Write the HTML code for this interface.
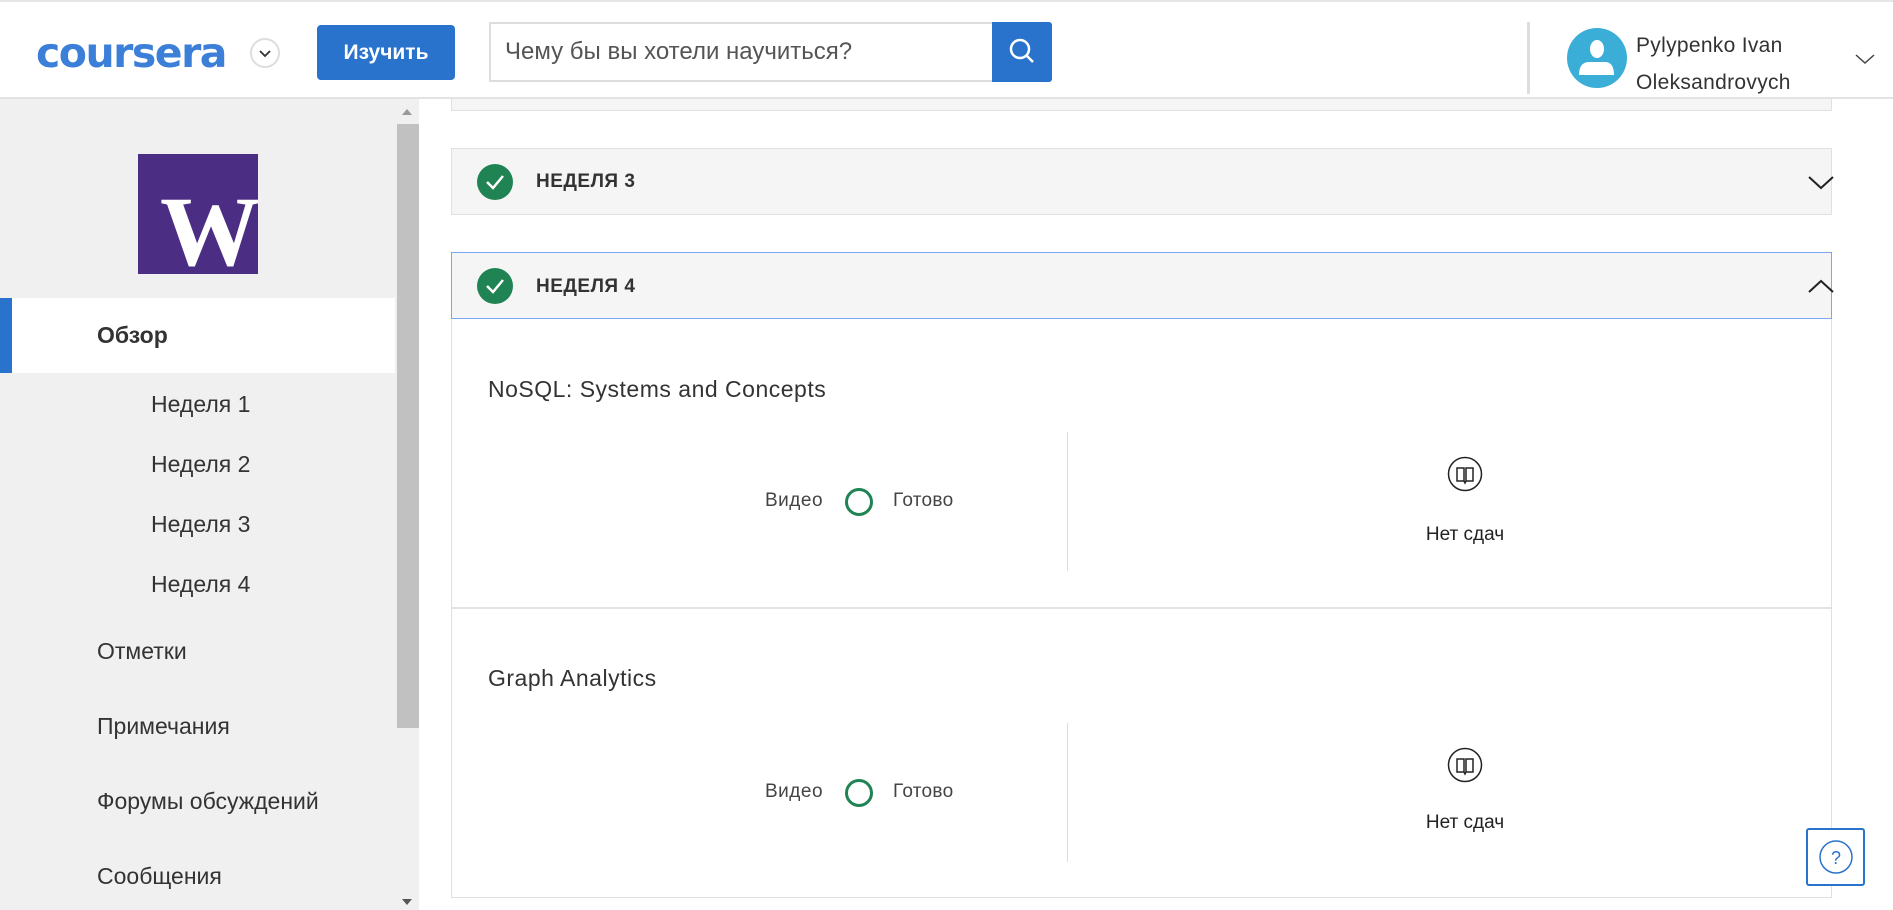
<!DOCTYPE html>
<html><head><meta charset="utf-8"><style>
*{box-sizing:border-box;margin:0;padding:0}
body{width:1893px;height:910px;overflow:hidden;background:#fff;font-family:"Liberation Sans",sans-serif;position:relative;color:#222}
.a{position:absolute}
.hdr{left:0;top:0;width:1893px;height:99px;background:#fff;border-top:2px solid #e6e6e6;border-bottom:2px solid #e3e3e3;z-index:2}
.side{left:0;top:99px;width:419px;height:811px;background:#f0f0f0}
.si{position:absolute;left:97px;font-size:23px;color:#333}
.sub{position:absolute;left:151px;font-size:23px;color:#333}
.card{position:absolute;left:451px;width:1381px;background:#f5f5f5;border:1.5px solid #e0e0e0}
.chk{position:absolute;left:477px;width:36px;height:36px;border-radius:50%;background:#1f8354}
.wk{position:absolute;left:536px;font-size:19px;font-weight:bold;color:#333;letter-spacing:.5px}
.t{position:absolute;left:488px;font-size:23px;color:#333;letter-spacing:.5px}
</style></head><body>
<div class="a hdr">
 <div class="a" style="left:36px;top:27px;font-size:41px;font-weight:bold;color:#3b7fd9;letter-spacing:-1.5px;font-family:'DejaVu Sans',sans-serif">coursera</div>
 <div class="a" style="left:250px;top:36px;width:30px;height:30px;border:2px solid #ddd;border-radius:50%"><svg width="26" height="26"><path d="M8 11 L13 16 L18 11" fill="none" stroke="#333" stroke-width="1.8"/></svg></div>
 <div class="a" style="left:317px;top:23px;width:138px;height:55px;background:#2a73cc;border-radius:4px;color:#fff;font-size:21px;font-weight:bold;text-align:center;line-height:55px">Изучить</div>
 <div class="a" style="left:489px;top:20px;width:504px;height:60px;border:2px solid #ddd;border-right:none;font-size:24px;color:#555;padding:14px 0 0 14px">Чему бы вы хотели научиться?</div>
 <div class="a" style="left:992px;top:20px;width:60px;height:60px;background:#2a73cc;border-radius:0 3px 3px 0">
  <svg width="60" height="60"><circle cx="28" cy="27" r="9" fill="none" stroke="#fff" stroke-width="2.5"/><line x1="35" y1="34" x2="41" y2="40" stroke="#fff" stroke-width="2.5"/></svg></div>
 <div class="a" style="left:1527px;top:20px;width:3px;height:72px;background:#ddd"></div>
 <svg class="a" style="left:1566px;top:25px" width="62" height="62"><circle cx="31" cy="31" r="30" fill="#3baed8"/><ellipse cx="31" cy="22" rx="7" ry="9" fill="#fff"/><path d="M13 48 Q13 36 22 35 L40 35 Q48 36 48 48 Z" fill="#fff"/></svg>
 <div class="a" style="left:1636px;top:25px;font-size:21px;color:#333;line-height:37px;letter-spacing:.3px">Pylypenko Ivan<br>Oleksandrovych</div>
 <svg class="a" style="left:1855px;top:52px" width="20" height="12"><path d="M1 1 L10 9 L19 1" fill="none" stroke="#444" stroke-width="1.5"/></svg>
</div>
<div class="a side">
 <div class="a" style="left:138px;top:55px;width:120px;height:120px;background:#4b2e83;overflow:hidden"><div style="position:absolute;left:22px;top:38px;font-family:'Liberation Serif',serif;font-weight:bold;font-size:100px;color:#fff;line-height:80px">W</div></div>
 <div class="a" style="left:397px;top:0;width:22px;height:811px;background:#f0f0f0"></div>
 <svg class="a" style="left:400px;top:8px" width="14" height="10"><path d="M2 8 L7 2 L12 8 Z" fill="#999"/></svg>
 <svg class="a" style="left:400px;top:798px" width="14" height="10"><path d="M2 2 L7 8 L12 2 Z" fill="#555"/></svg>
 <div class="a" style="left:397px;top:25px;width:22px;height:604px;background:#c1c1c1"></div>
 <div class="a" style="left:0;top:199px;width:395px;height:75px;background:#fff"></div>
 <div class="a" style="left:0;top:199px;width:12px;height:75px;background:#2a73cc"></div>
 <div class="si" style="top:223px;font-weight:bold">Обзор</div>
 <div class="sub" style="top:292px">Неделя 1</div>
 <div class="sub" style="top:352px">Неделя 2</div>
 <div class="sub" style="top:412px">Неделя 3</div>
 <div class="sub" style="top:472px">Неделя 4</div>
 <div class="si" style="top:539px">Отметки</div>
 <div class="si" style="top:614px">Примечания</div>
 <div class="si" style="top:689px">Форумы обсуждений</div>
 <div class="si" style="top:764px">Сообщения</div>
</div>
<div class="card" style="top:90px;height:21px"></div>
<div class="card" style="top:148px;height:67px"></div>
<div class="chk" style="top:164px"><svg width="36" height="36"><path d="M10 18 L16 24 L26 12" fill="none" stroke="#fff" stroke-width="2.5"/></svg></div>
<div class="wk" style="top:171px">НЕДЕЛЯ 3</div>
<svg class="a" style="left:1808px;top:176px" width="26" height="14"><path d="M1 1 L13 12 L25 1" fill="none" stroke="#222" stroke-width="2"/></svg>
<div class="a" style="left:451px;top:318px;width:1381px;height:580px;border:1.5px solid #e0e0e0;border-top:none"></div>
<div class="card" style="top:252px;height:67px;border-color:#7aa7f0"></div>
<div class="chk" style="top:268px"><svg width="36" height="36"><path d="M10 18 L16 24 L26 12" fill="none" stroke="#fff" stroke-width="2.5"/></svg></div>
<div class="wk" style="top:276px">НЕДЕЛЯ 4</div>
<svg class="a" style="left:1808px;top:279px" width="26" height="14"><path d="M1 13 L13 2 L25 13" fill="none" stroke="#222" stroke-width="2"/></svg>
<div class="t" style="top:376px">NoSQL: Systems and Concepts</div>
<div class="a" style="left:1067px;top:432px;width:1px;height:139px;background:#ddd"></div>
<div class="a" style="left:765px;top:490px;font-size:19px;color:#444;letter-spacing:.5px">Видео</div>
<div class="a" style="left:845px;top:488px;width:28px;height:28px;border:3px solid #1f8354;border-radius:50%"></div>
<div class="a" style="left:893px;top:490px;font-size:19px;color:#444;letter-spacing:.3px">Готово</div>
<svg class="a" style="left:1447px;top:456px" width="36" height="36"><circle cx="18" cy="18" r="16.5" fill="none" stroke="#222" stroke-width="1.5"/><path d="M10 12 H17 V25 H10 Z M19 12 H26 V25 H19 Z M17 25 L18 27 L19 25" fill="none" stroke="#222" stroke-width="1.5"/></svg>
<div class="a" style="left:1405px;top:524px;width:120px;text-align:center;font-size:19px;color:#222">Нет сдач</div>
<div class="a" style="left:452px;top:607px;width:1379px;height:2px;background:#e3e3e3"></div>
<div class="t" style="top:665px">Graph Analytics</div>
<div class="a" style="left:1067px;top:723px;width:1px;height:139px;background:#ddd"></div>
<div class="a" style="left:765px;top:781px;font-size:19px;color:#444;letter-spacing:.5px">Видео</div>
<div class="a" style="left:845px;top:779px;width:28px;height:28px;border:3px solid #1f8354;border-radius:50%"></div>
<div class="a" style="left:893px;top:781px;font-size:19px;color:#444;letter-spacing:.3px">Готово</div>
<svg class="a" style="left:1447px;top:747px" width="36" height="36"><circle cx="18" cy="18" r="16.5" fill="none" stroke="#222" stroke-width="1.5"/><path d="M10 12 H17 V25 H10 Z M19 12 H26 V25 H19 Z M17 25 L18 27 L19 25" fill="none" stroke="#222" stroke-width="1.5"/></svg>
<div class="a" style="left:1405px;top:812px;width:120px;text-align:center;font-size:19px;color:#222">Нет сдач</div>
<div class="a" style="left:1806px;top:828px;width:59px;height:58px;background:#fff;border:2px solid #2a73cc;border-radius:3px"><svg width="55" height="54"><circle cx="28" cy="27" r="16" fill="none" stroke="#2a73cc" stroke-width="1.5"/><text x="28" y="34" text-anchor="middle" font-size="18" fill="#2a73cc" font-family="Liberation Sans">?</text></svg></div>
</body></html>
